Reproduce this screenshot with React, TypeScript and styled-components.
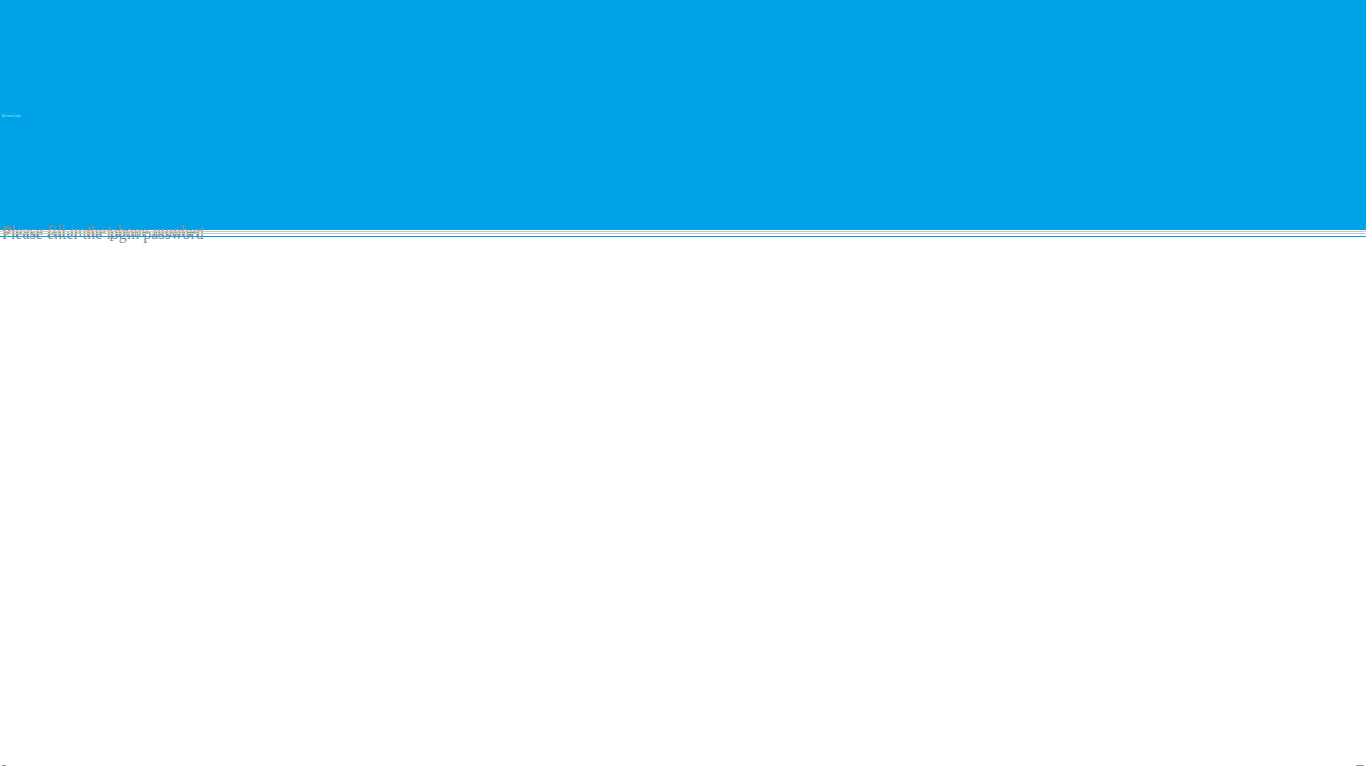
import React from "react";
import styled, { createGlobalStyle } from "styled-components";

const GlobalStyle = createGlobalStyle`
  html, body {
    margin: 0;
    padding: 0;
    background: #ffffff;
    font-family: serif;
  }
`;

const Page = styled.div`
  height: 768px;
  display: flex;
  flex-direction: column;
  overflow: hidden;
`;

const Header = styled.header`
  height: 230px;
  flex: none;
  background: #00a3e8;
  display: flex;
  flex-direction: column;
  justify-content: center;
  padding: 0 0 2px 2px;
  box-sizing: border-box;
`;

const TinyText = styled.div<{ $bright?: boolean }>`
  font-size: 3px;
  line-height: 2px;
  height: 2px;
  color: ${(p) => (p.$bright ? "#a8e0f8" : "#5cc3ef")};
  font-family: "Liberation Sans", Arial, sans-serif;
  white-space: nowrap;
`;

const Form = styled.form`
  display: grid;
  height: 12px;
  flex: none;
`;

const Field = styled.input<{ $shift: number }>`
  grid-area: 1 / 1;
  align-self: start;
  margin: ${(p) => p.$shift}px 0 0 0;
  width: 100%;
  height: 20px;
  box-sizing: border-box;
  border: none;
  background: transparent;
  padding: 0 2px;
  font-family: serif;
  font-size: 16px;
  outline: none;

  &::placeholder {
    color: #8c8c8c;
  }
`;

const Rule = styled.div<{ $shift: number; $color: string }>`
  grid-area: 1 / 1;
  align-self: start;
  margin-top: ${(p) => p.$shift}px;
  height: 1px;
  background: ${(p) => p.$color};
  pointer-events: none;
`;

const Spacer = styled.div`
  flex: 1;
`;

const Footer = styled.footer`
  display: flex;
  justify-content: space-between;
  padding: 0 2px 2px;
`;

const Mark = styled.span<{ $w: number }>`
  width: ${(p) => p.$w}px;
  height: 1px;
  background: #9a9a9a;
`;

export default function App() {
  return (
    <>
      <GlobalStyle />
      <Page>
        <Header>
          <TinyText>·</TinyText>
          <TinyText>· · · · · · · ·</TinyText>
          <TinyText $bright>Account Login</TinyText>
        </Header>
        <Form>
          <Field $shift={-8} placeholder="Please fill in the phone number" />
          <Field $shift={-6} type="password" placeholder="Please enter the login password" />
          <Rule $shift={1} $color="#c8c8c8" />
          <Rule $shift={3} $color="#c8c8c8" />
          <Rule $shift={6} $color="#00a3e8" />
        </Form>
        <Spacer />
        <Footer>
          <Mark $w={4} />
          <Mark $w={8} />
        </Footer>
      </Page>
    </>
  );
}
